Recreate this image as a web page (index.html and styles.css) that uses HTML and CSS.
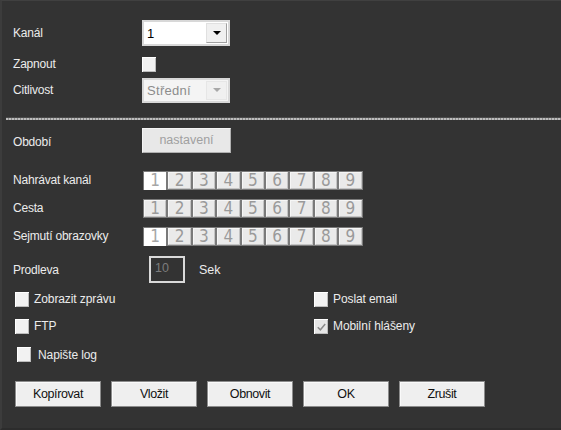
FILE: index.html
```html
<!DOCTYPE html>
<html>
<head>
<meta charset="utf-8">
<link rel="stylesheet" href="styles.css">
</head>
<body>
<div class="panel">
  <div class="row r-kanal">
    <span class="label">Kanál</span>
    <div class="select"><span class="sel-text">1</span><span class="sel-btn"><span class="tri"></span></span></div>
  </div>
  <div class="row r-zapnout">
    <span class="label">Zapnout</span>
    <span class="check"></span>
  </div>
  <div class="row r-citl">
    <span class="label">Citlivost</span>
    <div class="select disabled"><span class="sel-text">Střední</span><span class="sel-btn"><span class="tri"></span></span></div>
  </div>
  <div class="sep"></div>
  <div class="row r-obdobi">
    <span class="label">Období</span>
    <span class="setbtn">nastavení</span>
  </div>
  <div class="row r-ch r-ch1">
    <span class="label">Nahrávat kanál</span>
    <div class="boxes"><span class="box on">1</span><span class="box">2</span><span class="box">3</span><span class="box">4</span><span class="box">5</span><span class="box">6</span><span class="box">7</span><span class="box">8</span><span class="box">9</span></div>
  </div>
  <div class="row r-ch r-ch2">
    <span class="label">Cesta</span>
    <div class="boxes"><span class="box">1</span><span class="box">2</span><span class="box">3</span><span class="box">4</span><span class="box">5</span><span class="box">6</span><span class="box">7</span><span class="box">8</span><span class="box">9</span></div>
  </div>
  <div class="row r-ch r-ch3">
    <span class="label">Sejmutí obrazovky</span>
    <div class="boxes"><span class="box on">1</span><span class="box">2</span><span class="box">3</span><span class="box">4</span><span class="box">5</span><span class="box">6</span><span class="box">7</span><span class="box">8</span><span class="box">9</span></div>
  </div>
  <div class="row r-prod">
    <span class="label">Prodleva</span>
    <span class="num">10</span>
    <span class="unit">Sek</span>
  </div>
  <div class="opts">
    <label class="opt"><span class="check"></span>Zobrazit zprávu</label>
    <label class="opt"><span class="check"></span>Poslat email</label>
    <label class="opt"><span class="check"></span>FTP</label>
    <label class="opt"><span class="check checked"><svg viewBox="0 0 14 14" width="14" height="14"><path d="M3 7.2 L5.8 10 L11 3.8" fill="none" stroke="#8a8a8a" stroke-width="1.6"/></svg></span>Mobilní hlášeny</label>
    <label class="opt opt-log"><span class="check"></span>Napište log</label>
  </div>
  <div class="buttons">
    <span class="btn">Kopírovat</span>
    <span class="btn">Vložit</span>
    <span class="btn">Obnovit</span>
    <span class="btn">OK</span>
    <span class="btn">Zrušit</span>
  </div>
</div>
</body>
</html>
```
FILE: styles.css
```css
html, body {
  margin: 0;
  padding: 0;
  background: #333333;
}
.panel {
  width: 561px;
  height: 430px;
  box-sizing: border-box;
  background: #333333;
  border-top: 1px solid #404040;
  border-left: 2px solid #3c3c3c;
  border-bottom: 2px solid #2c2c2c;
  padding: 19px 0 0 11px;
  font-family: "Liberation Sans", Arial, sans-serif;
  font-size: 12px;
  color: #ececec;
  position: relative;
}
.row {
  display: flex;
  align-items: center;
}
.label {
  width: 129px;
  flex: none;
  letter-spacing: -0.2px;
}
.r-kanal { height: 26px; }
.r-zapnout { height: 16px; margin-top: 10px; }
.r-citl { height: 24px; margin-top: 6px; }
.select {
  width: 84px;
  height: 21px;
  background: #ffffff;
  border: 2px solid #d8d8d8;
  display: flex;
  align-items: stretch;
}
.r-kanal .select { height: 22px; }
.sel-text {
  flex: 1;
  padding-left: 3px;
  color: #000;
  font-size: 13px;
  display: flex;
  align-items: center;
}
.sel-btn {
  width: 19px;
  margin: 1px;
  background: #f0f0f0;
  border: 1px solid #e0e0e0;
  border-bottom-color: #a0a0a0;
  border-right-color: #a0a0a0;
  display: flex;
  align-items: center;
  justify-content: center;
}
.tri {
  width: 0;
  height: 0;
  border-left: 4px solid transparent;
  border-right: 4px solid transparent;
  border-top: 4px solid #000;
}
.select.disabled {
  background: #f4f4f4;
}
.select.disabled .sel-text {
  color: #8c8c8c;
  letter-spacing: 0.3px;
}
.select.disabled .sel-btn {
  background: #f0f0f0;
  border-color: #e6e6e6;
}
.select.disabled .tri {
  border-top-color: #a8a8a8;
}
.check {
  width: 14px;
  height: 15px;
  background: #f2f2f2;
  border-left: 1px solid #ffffff;
  border-top: 1px solid #ffffff;
  box-shadow: inset -1px -1px 0 #bcbcbc;
  box-sizing: border-box;
  display: inline-flex;
  align-items: center;
  justify-content: center;
  flex: none;
}
.check.checked {
  background: #e6e6e6;
}
.sep {
  margin: 15px 0 0 -7px;
  height: 2px;
  background: repeating-linear-gradient(90deg, #bdbdbd 0 2px, #8a8a8a 2px 3px);
  border-top: 1px solid #4a4a4a;
  width: 556px;
}
.r-obdobi { height: 26px; margin-top: 7px; }
.r-obdobi .label { padding-top: 3px; }
.setbtn {
  width: 89px;
  height: 25px;
  box-sizing: border-box;
  background: #e8e8e8;
  border: 1px solid #f4f4f4;
  border-right-color: #b0b0b0;
  border-bottom-color: #b0b0b0;
  color: #a0a0a0;
  font-size: 12.5px;
  display: flex;
  align-items: center;
  justify-content: center;
}
.r-ch { height: 20px; }
.r-ch1 { margin-top: 17px; }
.r-ch2 { margin-top: 8px; }
.r-ch3 { margin-top: 8px; }
.boxes {
  display: flex;
  margin-left: 1px;
  background: #7a7a7a;
  padding: 1px;
  gap: 2px;
}
.box {
  width: 22.4px;
  height: 17px;
  box-sizing: border-box;
  background: #eaeaea;
  border: 1px solid #f6f6f6;
  border-right-color: #c4c4c4;
  border-bottom-color: #c4c4c4;
  color: #9a9a9a;
  font-family: "Liberation Sans Narrow", "DejaVu Sans Condensed", sans-serif;
  font-size: 17px;
  line-height: 15px;
  text-align: center;
}
.box.on {
  background: #ffffff;
  border-color: #ffffff;
  color: #a6a6a6;
  box-shadow: 0 1px 0 #ffffff;
}
.r-prod { height: 27px; margin-top: 10px; }
.num {
  margin-left: 7px;
  width: 36px;
  height: 27px;
  box-sizing: border-box;
  border: 2px solid #dadada;
  color: #7c7c7c;
  font-size: 12.5px;
  padding: 3px 0 0 4px;
}
.unit {
  margin-left: 14px;
  font-size: 12.5px;
}
.opts {
  display: grid;
  grid-template-columns: 299px auto;
  grid-template-rows: 16px 16px 16px;
  row-gap: 11px;
  margin-top: 8px;
  margin-left: 2px;
}
.opt {
  display: flex;
  align-items: center;
  gap: 5px;
  letter-spacing: -0.1px;
}
.opt-log { margin-left: 2px; gap: 7px; margin-top: 3px; }
.buttons {
  display: flex;
  gap: 10px;
  margin-top: 20px;
  margin-left: 2px;
}
.btn {
  width: 86px;
  height: 26px;
  box-sizing: border-box;
  background: #efefef;
  border: 1px solid #8c8c8c;
  box-shadow: inset 1px 1px 0 #fafafa;
  color: #111;
  font-size: 12.5px;
  letter-spacing: -0.4px;
  display: flex;
  align-items: center;
  justify-content: center;
}
```
